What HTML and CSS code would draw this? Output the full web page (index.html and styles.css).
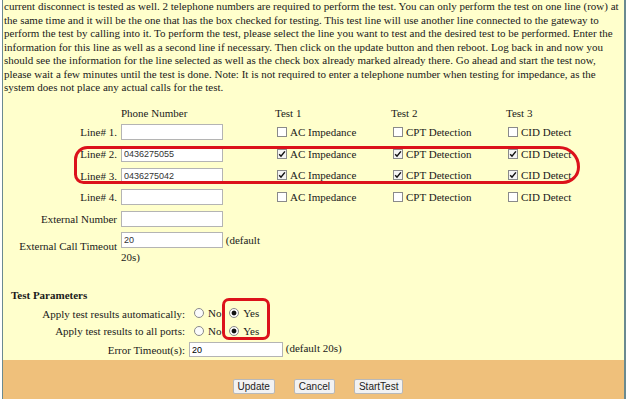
FILE: index.html
```html
<!DOCTYPE html>
<html lang="en">
<head>
  <meta charset="UTF-8">
  <title>Line Test</title>
  <link rel="stylesheet" href="styles.css">
</head>
<body>

<div class="page">
  <div class="content">
    <p class="intro">current disconnect is tested as well. 2 telephone numbers are required to perform the test. You can only perform the test on one line (row) at the same time and it will be the one that has the box checked for testing. This test line will use another line connected to the gateway to perform the test by calling into it. To perform the test, please select the line you want to test and the desired test to be performed. Enter the information for this line as well as a second line if necessary. Then click on the update button and then reboot. Log back in and now you should see the information for the line selected as well as the check box already marked already there. Go ahead and start the test now, please wait a few minutes until the test is done. Note: It is not required to enter a telephone number when testing for impedance, as the system does not place any actual calls for the test.</p>

    <table class="lines">
      <tr class="head">
        <td class="lbl"></td>
        <td class="num">Phone Number</td>
        <td class="t1">Test 1</td>
        <td class="t2">Test 2</td>
        <td>Test 3</td>
      </tr>
      <tr>
        <td class="lbl">Line# 1.</td>
        <td class="num"><input type="text" class="phone"></td>
        <td><label><input type="checkbox">AC Impedance</label></td>
        <td><label><input type="checkbox">CPT Detection</label></td>
        <td><label><input type="checkbox">CID Detect</label></td>
      </tr>
      <tr>
        <td class="lbl">Line# 2.</td>
        <td class="num"><input type="text" class="phone" value="0436275055"></td>
        <td><label><input type="checkbox" checked>AC Impedance</label></td>
        <td><label><input type="checkbox" checked>CPT Detection</label></td>
        <td><label><input type="checkbox" checked>CID Detect</label></td>
      </tr>
      <tr>
        <td class="lbl">Line# 3.</td>
        <td class="num"><input type="text" class="phone" value="0436275042"></td>
        <td><label><input type="checkbox" checked>AC Impedance</label></td>
        <td><label><input type="checkbox" checked>CPT Detection</label></td>
        <td><label><input type="checkbox" checked>CID Detect</label></td>
      </tr>
      <tr>
        <td class="lbl">Line# 4.</td>
        <td class="num"><input type="text" class="phone"></td>
        <td><label><input type="checkbox">AC Impedance</label></td>
        <td><label><input type="checkbox">CPT Detection</label></td>
        <td><label><input type="checkbox">CID Detect</label></td>
      </tr>
      <tr>
        <td class="lbl">External Number</td>
        <td class="num"><input type="text" class="phone"></td>
        <td colspan="3"></td>
      </tr>
      <tr class="timeout">
        <td class="lbl">External Call Timeout</td>
        <td class="num wrap"><input type="text" class="phone" value="20"> (default 20s)</td>
        <td colspan="3"></td>
      </tr>
    </table>

    <h3 class="params-title">Test Parameters</h3>
    <table class="params">
      <tr>
        <td class="plbl">Apply test results automatically:</td>
        <td><label><input type="radio" name="auto">No</label> <label><input type="radio" name="auto" checked>Yes</label></td>
      </tr>
      <tr>
        <td class="plbl">Apply test results to all ports:</td>
        <td><label><input type="radio" name="ports">No</label> <label><input type="radio" name="ports" checked>Yes</label></td>
      </tr>
      <tr class="err-row">
        <td class="plbl">Error Timeout(s):</td>
        <td><input type="text" class="err" value="20"> (default 20s)</td>
      </tr>
    </table>

    <div class="mark mark-lines"></div>
    <div class="mark mark-yes"></div>
  </div>

  <div class="footer">
    <button>Update</button>
    <button>Cancel</button>
    <button>StartTest</button>
  </div>
</div>

</body>
</html>
```

FILE: styles.css
```css
body {
  margin: 0;
  background-color: #fff;
  font-family: "Liberation Serif", "Times New Roman", serif;
  font-size: 11px;
  color: #1a1a1a;
}
.page {
  margin-left: 2px;
  width: 621px;
  height: 399px;
  border-left: 1px solid #6a8a90;
  border-right: 2px solid #6a8a90;
  background-color: #ffffcc;
  display: flex;
  flex-direction: column;
  overflow: hidden;
}
.content {
  position: relative;
  flex: 1;
}
.intro {
  margin: 0 0 0 1px;
  width: 616px;
  line-height: 13.5px;
}
.lines {
  border-collapse: collapse;
  margin-top: 10px;
}
.lines td {
  padding: 0;
  height: 21.7px;
  white-space: nowrap;
}
.lines .head td {
  height: 17px;
  vertical-align: middle;
}
.lbl {
  width: 114px;
  text-align: right;
  padding-right: 4px !important;
}
.num {
  width: 154px;
}
.t1 {
  width: 116px;
}
.t2 {
  width: 115px;
}
input.phone {
  box-sizing: border-box;
  width: 102px;
  height: 16px;
  padding: 0 2px;
  border: 1px solid #b4b4b4;
  background-color: #fff;
  font-family: "Liberation Sans", Arial, sans-serif;
  font-size: 9px;
  color: #333;
  margin: 0;
  vertical-align: middle;
}
label {
  display: inline-flex;
  align-items: center;
}
input[type="checkbox"] {
  appearance: none;
  box-sizing: border-box;
  width: 10px;
  height: 10px;
  margin: 0 3px 0 2px;
  border: 1px solid #8a8a8a;
  background-color: #fff;
}
input[type="checkbox"]:checked {
  background-color: #f4f4f4;
  background-image: url("data:image/svg+xml,%3Csvg xmlns='http://www.w3.org/2000/svg' viewBox='0 0 8 8'%3E%3Cpath d='M1.2 4.2 L3 6.2 L6.9 1.4' fill='none' stroke='%23111' stroke-width='1.5'/%3E%3C/svg%3E");
  background-size: 8px 8px;
  background-position: center;
  background-repeat: no-repeat;
}
input[type="radio"] {
  appearance: none;
  box-sizing: border-box;
  width: 10px;
  height: 10px;
  margin: 0 4px 0 5px;
  border: 1px solid #8a8a8a;
  border-radius: 50%;
  background-color: #fbfbfb;
}
input[type="radio"]:checked {
  background: radial-gradient(circle, #111 0, #111 2px, #fbfbfb 2.8px);
}
.timeout td {
  vertical-align: top;
  height: auto;
}
.timeout .lbl {
  padding-top: 10px !important;
}
.timeout .wrap {
  white-space: normal;
  width: 150px;
  line-height: 17px;
  padding-top: 2px !important;
}
.timeout .wrap input {
  vertical-align: top;
}
.params-title {
  font-size: 11px;
  line-height: 14px;
  margin: 22px 0 3px 8px;
}
.params {
  border-collapse: collapse;
}
.params td {
  padding: 0;
  height: 17.5px;
  white-space: nowrap;
}
.params .err-row td {
  height: 20px;
}
.plbl {
  width: 182px;
  text-align: right;
  padding-right: 4px !important;
}
input.err {
  box-sizing: border-box;
  width: 94px;
  height: 15px;
  padding: 0 2px;
  border: 1px solid #b4b4b4;
  font-family: "Liberation Sans", Arial, sans-serif;
  font-size: 9px;
  margin: 0;
  vertical-align: middle;
}
.footer {
  height: 39px;
  background-color: #efc07b;
  display: flex;
  justify-content: center;
  align-items: flex-end;
  gap: 19px;
  padding: 0 0 5px 9px;
  box-sizing: border-box;
}
.footer button {
  font-family: "Liberation Sans", Arial, sans-serif;
  font-size: 10px;
  padding: 0 4px;
  height: 15px;
  background-color: #f2f2f2;
  border: 1px solid #b8b8b8;
  border-radius: 2px;
  color: #222;
}
.mark {
  position: absolute;
  box-sizing: border-box;
  border: 3px solid #dc121b;
}
.mark-lines {
  left: 71px;
  top: 146px;
  width: 506px;
  height: 38px;
  border-radius: 14px 22px 18px 10px;
}
.mark-yes {
  left: 219px;
  top: 298px;
  width: 48px;
  height: 42px;
  border-radius: 7px;
}
```
